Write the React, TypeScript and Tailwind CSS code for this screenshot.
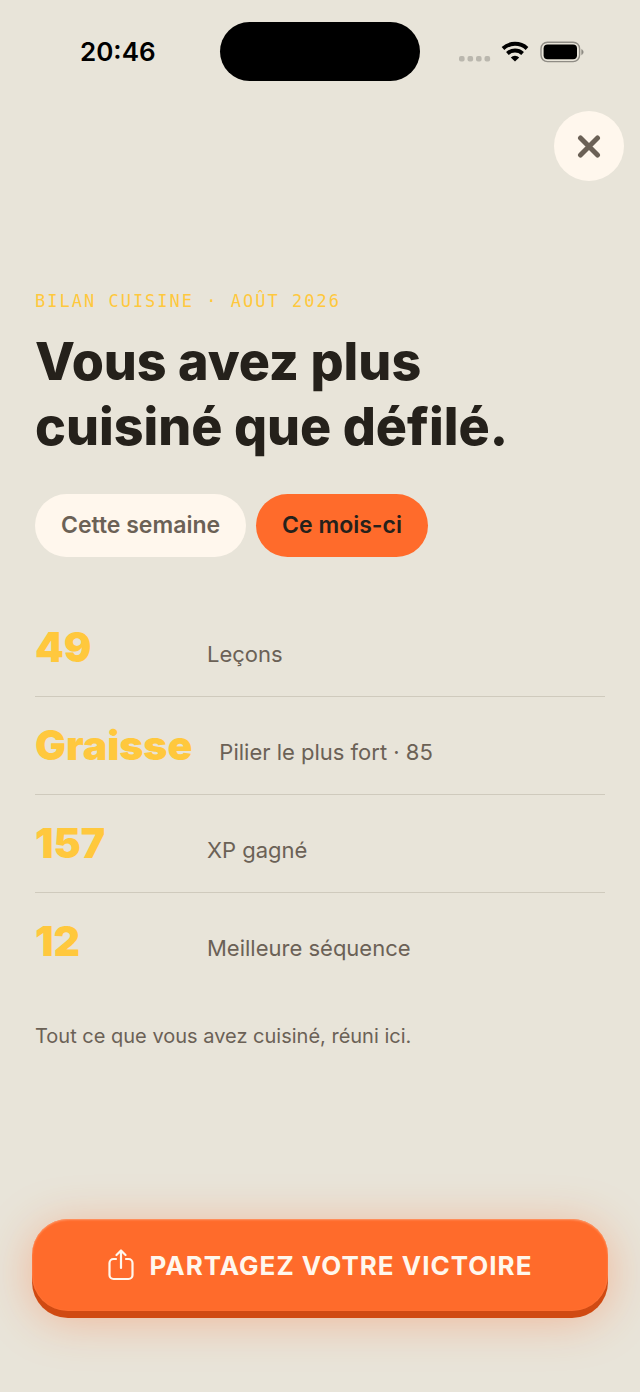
const stats = [
    { value: "49", label: "Leçons" },
    { value: "Graisse", label: "Pilier le plus fort · 85" },
    { value: "157", label: "XP gagné" },
    { value: "12", label: "Meilleure séquence" },
];

const periods = [
    { label: "Cette semaine", active: false },
    { label: "Ce mois-ci", active: true },
];

function StatusBar() {
    return (
        <div className="grid grid-cols-[1fr_auto_1fr] items-center pt-[22px] text-black">
            <span className="pl-20 text-[26px] leading-8 font-semibold">20:46</span>
            <div className="h-[59px] w-[200px] rounded-full bg-black" />
            <div className="flex items-center justify-end pr-14">
                <svg width="126" height="24" viewBox="0 0 126 24" aria-hidden="true">
                    <g fill="#bab7ae">
                        <rect x="1" y="16" width="5.6" height="5.6" rx="2" />
                        <rect x="9.5" y="16" width="5.6" height="5.6" rx="2" />
                        <rect x="18" y="16" width="5.6" height="5.6" rx="2" />
                        <rect x="26.5" y="16" width="5.6" height="5.6" rx="2" />
                    </g>
                    <g fill="none" stroke="#000" strokeWidth="4">
                        <path d="M45 8.4a18 18 0 0 1 24 0" />
                        <path d="M49.4 13.4a11.4 11.4 0 0 1 15.2 0" />
                    </g>
                    <path d="M57 21.6l-4.2-4.1a5.9 5.9 0 0 1 8.4 0z" fill="#000" />
                    <rect x="83" y="2.2" width="38.6" height="19.4" rx="6.5" fill="none" stroke="#8f8c85" strokeWidth="1.4" />
                    <rect x="85.6" y="4.6" width="33.4" height="14.6" rx="4" fill="#000" />
                    <path d="M123.600 9.400v5.400a3 3 0 0 0 0-5.400z" fill="#8f8c85" stroke="#8f8c85" strokeWidth="0.5" />
                </svg>
            </div>
        </div>
    );
}

function ShareIcon() {
    return (
        <svg width="26" height="32" viewBox="0 0 26 32" fill="none" stroke="currentColor" strokeWidth="2.2" strokeLinecap="round" strokeLinejoin="round" aria-hidden="true">
            <path d="M8 10H5.5a4 4 0 0 0-4 4v12a4 4 0 0 0 4 4h15a4 4 0 0 0 4-4V14a4 4 0 0 0-4-4H18" />
            <path d="M13 19V2M8.5 6L13 1.500 17.500 6" />
        </svg>
    );
}

export default function App() {
    return (
        <div className="flex min-h-screen flex-col bg-[#e8e4d9] font-['Inter',sans-serif] text-[#6b6156]">
            <StatusBar />

            <div className="flex justify-end px-4 pt-[30px]">
                <button type="button" aria-label="Fermer" className="flex size-[70px] items-center justify-center rounded-full bg-[#fff7ed]">
                    <svg width="24" height="24" viewBox="0 0 24 24" fill="none" stroke="currentColor" strokeWidth="5" strokeLinecap="round" aria-hidden="true">
                        <path d="M3.5 4l17 17M20.5 4l-17 17" />
                    </svg>
                </button>
            </div>

            <main className="px-[35px] pt-[108px]">
                <p className="font-['DejaVu_Sans_Mono',monospace] text-[17px] leading-6 tracking-[2px] text-[#ffc83d]">
                    BILAN CUISINE · AOÛT 2026
                </p>
                <h1 className="mt-4 text-[52px] leading-[65px] font-extrabold text-[#25211b]">
                    Vous avez plus
                    <br />
                    cuisiné que défilé.
                </h1>

                <div className="mt-[35px] flex gap-[10px]">
                    {periods.map((period) => (
                        <button
                            key={period.label}
                            type="button"
                            aria-pressed={period.active}
                            className={
                                period.active
                                    ? "h-[63px] rounded-full bg-[#ff6b2b] px-[26px] text-[23px] font-semibold text-[#25211b]"
                                    : "h-[63px] rounded-full bg-[#fff7ed] px-[26px] text-[23px] font-semibold"
                            }
                        >
                            {period.label}
                        </button>
                    ))}
                </div>

                <dl className="mt-[42px] divide-y divide-[#cfcabd]">
                    {stats.map((stat) => (
                        <div key={stat.label} className="flex items-baseline gap-[27px] py-6">
                            <dt className="order-2 text-[22px] leading-7">{stat.label}</dt>
                            <dd className="min-w-[145px] text-[41px] leading-[49px] font-black text-[#ffc83d]">{stat.value}</dd>
                        </div>
                    ))}
                </dl>

                <p className="mt-8 text-[20px] leading-7">Tout ce que vous avez cuisiné, réuni ici.</p>
            </main>

            <div className="mt-auto px-8 pt-12 pb-[81px]">
                <button
                    type="button"
                    className="flex h-[92px] w-full items-center justify-center gap-4 rounded-[36px] bg-[#ff6b2b] text-[26px] font-bold tracking-[1px] text-[#fff7ed] shadow-[inset_0_1px_2px_#ff9a6b,0_7px_0_#d04a12,0_8px_48px_#ff6b2b66]"
                >
                    <ShareIcon />
                    PARTAGEZ VOTRE VICTOIRE
                </button>
            </div>
        </div>
    );
}
